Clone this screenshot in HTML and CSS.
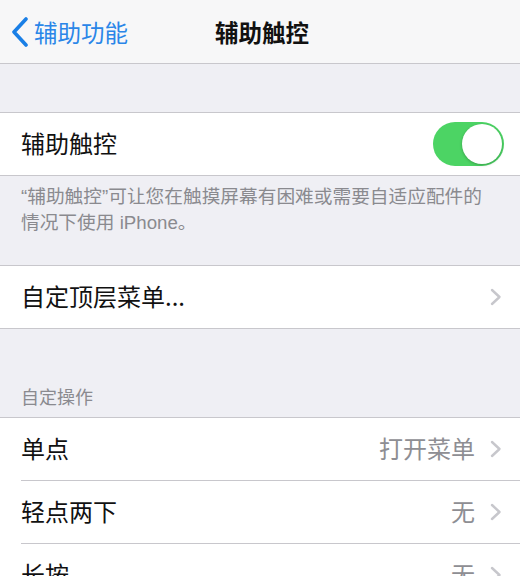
FILE: index.html
```html
<!DOCTYPE html>
<html lang="zh-CN">
<head>
<meta charset="utf-8">
<link rel="stylesheet" href="styles.css">
</head>
<body>
<div class="nav">
  <div class="back">
    <svg class="back-icon" width="18" height="30" viewBox="0 0 18 30"><path d="M15 2 L3 15 L15 28" fill="none" stroke="#1a7fe6" stroke-width="3.6" stroke-linecap="round" stroke-linejoin="round"/></svg>
    <span>辅助功能</span>
  </div>
  <div class="title">辅助触控</div>
</div>
<div class="gap-top"></div>
<div class="group">
  <div class="row">
    <span class="label">辅助触控</span>
    <div class="toggle"><div class="knob"></div></div>
  </div>
</div>
<p class="footer">“辅助触控”可让您在触摸屏幕有困难或需要自适应配件的情况下使用 iPhone。</p>
<div class="group">
  <div class="row">
    <span class="label">自定顶层菜单...</span>
    <svg class="chev" width="14" height="18" viewBox="0 0 14 18"><path d="M3 2 L10.5 9 L3 16" fill="none" stroke="#c7c7cc" stroke-width="2.4" stroke-linecap="round" stroke-linejoin="round"/></svg>
  </div>
</div>
<div class="header">自定操作</div>
<div class="group">
  <div class="row">
    <span class="label">单点</span>
    <span class="value">打开菜单</span>
    <svg class="chev" width="14" height="18" viewBox="0 0 14 18"><path d="M3 2 L10.5 9 L3 16" fill="none" stroke="#c7c7cc" stroke-width="2.4" stroke-linecap="round" stroke-linejoin="round"/></svg>
  </div>
  <div class="sep"></div>
  <div class="row">
    <span class="label">轻点两下</span>
    <span class="value">无</span>
    <svg class="chev" width="14" height="18" viewBox="0 0 14 18"><path d="M3 2 L10.5 9 L3 16" fill="none" stroke="#c7c7cc" stroke-width="2.4" stroke-linecap="round" stroke-linejoin="round"/></svg>
  </div>
  <div class="sep"></div>
  <div class="row">
    <span class="label">长按</span>
    <span class="value">无</span>
    <svg class="chev" width="14" height="18" viewBox="0 0 14 18"><path d="M3 2 L10.5 9 L3 16" fill="none" stroke="#c7c7cc" stroke-width="2.4" stroke-linecap="round" stroke-linejoin="round"/></svg>
  </div>
</div>
</body>
</html>
```
FILE: styles.css
```css
html, body {
  margin: 0;
  padding: 0;
}
body {
  width: 520px;
  height: 576px;
  overflow: hidden;
  background: #efeff4;
  font-family: "Noto Sans CJK SC", "Noto Sans", sans-serif;
  color: #111;
}
.nav {
  height: 63px;
  background: #f7f7f8;
  border-bottom: 1px solid #c8c7cc;
  display: flex;
  align-items: center;
  position: relative;
}
.back {
  display: flex;
  align-items: center;
  gap: 5px;
  padding-left: 11px;
  color: #2a86e8;
  font-size: 23.5px;
}
.back-icon {
  display: block;
}
.title {
  position: absolute;
  left: 0;
  right: 0;
  text-align: center;
  font-size: 23.5px;
  font-weight: 700;
  pointer-events: none;
  padding-left: 4px;
}
.gap-top {
  height: 48px;
}
.group {
  background: #fff;
  border-top: 1px solid #c8c7cc;
  border-bottom: 1px solid #c8c7cc;
}
.row {
  height: 62px;
  display: flex;
  align-items: center;
  padding: 0 17px 0 21px;
  font-size: 24px;
}
.label {
  flex: 1;
  margin-top: -3px;
}
.value {
  color: #8e8e93;
  margin-right: 14px;
  margin-top: -3px;
}
.chev {
  display: block;
}
.sep {
  height: 1px;
  background: #c8c7cc;
  margin-left: 21px;
}
.toggle {
  width: 71px;
  height: 44px;
  border-radius: 22px;
  background: #4cd464;
  position: relative;
  margin-right: -1px;
}
.knob {
  position: absolute;
  right: 2px;
  top: 2px;
  width: 40px;
  height: 40px;
  border-radius: 50%;
  background: #fff;
  box-shadow: 0 1px 3px rgba(0,0,0,0.25);
}
.footer {
  margin: 0;
  height: 89px;
  box-sizing: border-box;
  padding: 8px 21px 0 21px;
  font-family: "Liberation Sans", "Noto Sans CJK SC", sans-serif;
  font-size: 18.7px;
  line-height: 26px;
  color: #8a8a8f;
}
.header {
  padding: 55px 21px 9px 21px;
  font-size: 18px;
  line-height: 24px;
  color: #8a8a8f;
}
```
